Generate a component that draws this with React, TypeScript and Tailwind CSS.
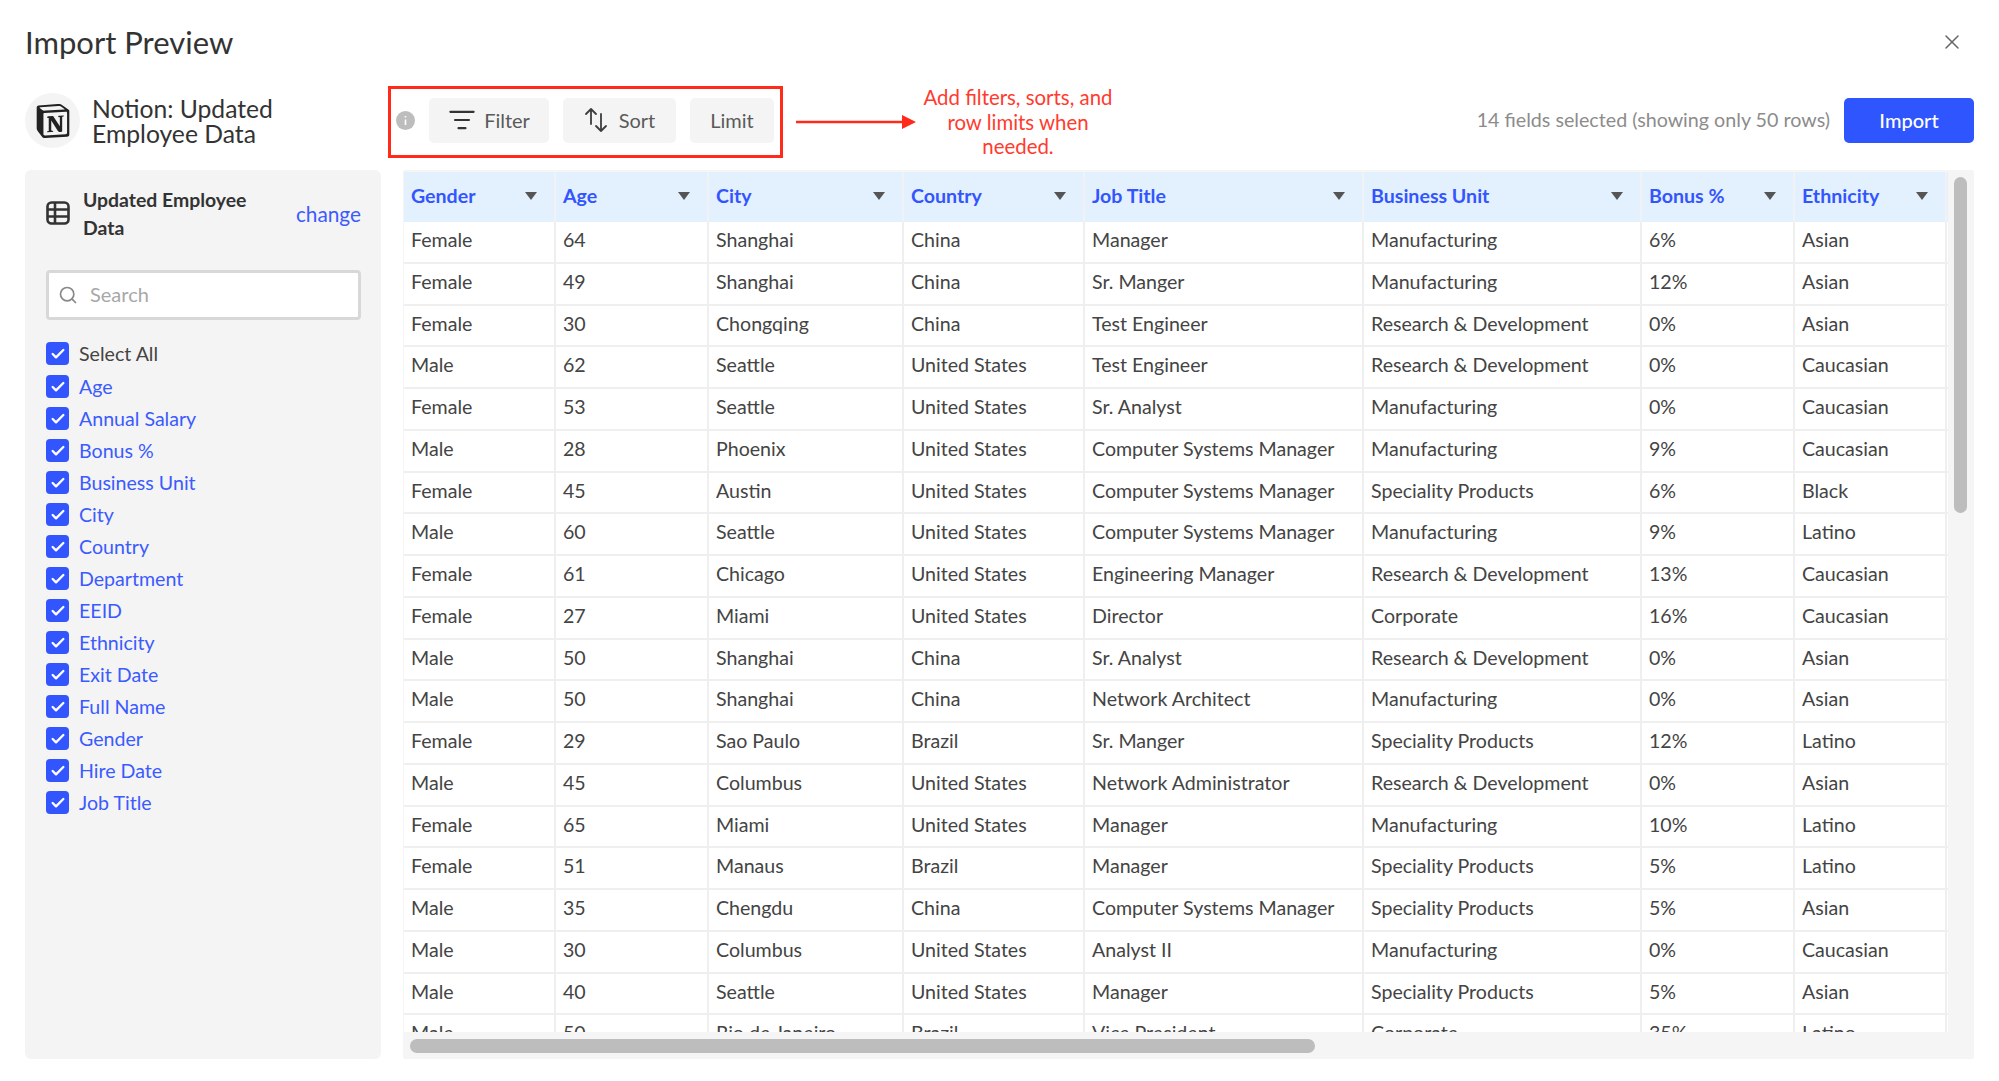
import React from "react";
import { SiNotion } from "react-icons/si";
import { Check, ListFilter, Search, X } from "lucide-react";

const columns = ["Gender", "Age", "City", "Country", "Job Title", "Business Unit", "Bonus %", "Ethnicity"];
const rows = [
  ["Female", "64", "Shanghai", "China", "Manager", "Manufacturing", "6%", "Asian"],
  ["Female", "49", "Shanghai", "China", "Sr. Manger", "Manufacturing", "12%", "Asian"],
  ["Female", "30", "Chongqing", "China", "Test Engineer", "Research & Development", "0%", "Asian"],
  ["Male", "62", "Seattle", "United States", "Test Engineer", "Research & Development", "0%", "Caucasian"],
  ["Female", "53", "Seattle", "United States", "Sr. Analyst", "Manufacturing", "0%", "Caucasian"],
  ["Male", "28", "Phoenix", "United States", "Computer Systems Manager", "Manufacturing", "9%", "Caucasian"],
  ["Female", "45", "Austin", "United States", "Computer Systems Manager", "Speciality Products", "6%", "Black"],
  ["Male", "60", "Seattle", "United States", "Computer Systems Manager", "Manufacturing", "9%", "Latino"],
  ["Female", "61", "Chicago", "United States", "Engineering Manager", "Research & Development", "13%", "Caucasian"],
  ["Female", "27", "Miami", "United States", "Director", "Corporate", "16%", "Caucasian"],
  ["Male", "50", "Shanghai", "China", "Sr. Analyst", "Research & Development", "0%", "Asian"],
  ["Male", "50", "Shanghai", "China", "Network Architect", "Manufacturing", "0%", "Asian"],
  ["Female", "29", "Sao Paulo", "Brazil", "Sr. Manger", "Speciality Products", "12%", "Latino"],
  ["Male", "45", "Columbus", "United States", "Network Administrator", "Research & Development", "0%", "Asian"],
  ["Female", "65", "Miami", "United States", "Manager", "Manufacturing", "10%", "Latino"],
  ["Female", "51", "Manaus", "Brazil", "Manager", "Speciality Products", "5%", "Latino"],
  ["Male", "35", "Chengdu", "China", "Computer Systems Manager", "Speciality Products", "5%", "Asian"],
  ["Male", "30", "Columbus", "United States", "Analyst II", "Manufacturing", "0%", "Caucasian"],
  ["Male", "40", "Seattle", "United States", "Manager", "Speciality Products", "5%", "Asian"],
  ["Male", "50", "Rio de Janeiro", "Brazil", "Vice President", "Corporate", "35%", "Latino"],
];
const fields = ["Age", "Annual Salary", "Bonus %", "Business Unit", "City", "Country", "Department", "EEID", "Ethnicity", "Exit Date", "Full Name", "Gender", "Hire Date", "Job Title"];

const gridCols = "grid grid-cols-[152px_153px_195px_181px_279px_278px_153px_152px]";

function Box() {
  return (
    <span className="flex h-[23px] w-[23px] shrink-0 items-center justify-center rounded-[4px] bg-[#3355ff]">
      <Check size={16} strokeWidth={3.5} className="text-white" />
    </span>
  );
}

function SortIcon() {
  return (
    <svg width="24" height="26" viewBox="0 0 24 26" fill="none" stroke="#3d3d3d" strokeWidth="1.8" strokeLinecap="round" strokeLinejoin="round">
      <path d="M7 17V2M2 7l5-5 5 5" />
      <path d="M17 7v17M12 19l5 5 5-5" />
    </svg>
  );
}

function TableIcon() {
  return (
    <svg className="mb-[2px] shrink-0" width="24" height="24" viewBox="0 0 24 24" fill="none" stroke="#333333" strokeWidth="2.6" strokeLinejoin="round">
      <rect x="1.5" y="1.5" width="21" height="21" rx="4" />
      <path d="M1.5 8.5h21M1.5 15.5h21M9 1.5v21" />
    </svg>
  );
}

function InfoDot() {
  return (
    <svg className="shrink-0" width="19" height="19" viewBox="0 0 19 19">
      <circle cx="9.5" cy="9.5" r="9.5" fill="#bdbdbd" />
      <path d="M9.5 8.5v5.5M9.5 5v1.6" stroke="#ffffff" strokeWidth="1.6" />
    </svg>
  );
}

export default function App() {
  return (
    <div className="flex h-[1081px] w-[1999px] flex-col overflow-hidden bg-white pl-[25px] pr-[25px] font-['Lato',sans-serif] text-[#444444]">
      <div className="flex h-[86px] shrink-0 items-center justify-between pb-[2px]">
        <h1 className="text-[31px] font-normal leading-none text-[#333333]">Import Preview</h1>
        <X size={24} strokeWidth={1.5} className="mr-[10px] text-[#666666]" />
      </div>

      <div className="flex h-[72px] shrink-0 items-center">
        <div className="flex w-[363px] shrink-0 items-center gap-[12px] pb-[3px]">
          <div className="flex h-[55px] w-[55px] items-center justify-center rounded-full bg-[#f4f4f4]">
            <SiNotion size={34} className="text-[#222222]" />
          </div>
          <div className="text-[24.7px] leading-[25px] text-[#333333]">Notion: Updated<br />Employee Data</div>
        </div>

        <div className="flex h-[72px] w-[395px] shrink-0 items-center border-[3px] border-[#ff2a1a] pb-[4px] pl-[5px]">
          <InfoDot />
          <button className="ml-[14px] flex h-[45px] w-[120px] items-center justify-center gap-[8px] rounded-[5px] bg-[#f4f4f4] text-[20px] text-[#5a5a5a]">
            <ListFilter size={28} strokeWidth={1.8} className="text-[#333333]" />
            Filter
          </button>
          <button className="ml-[14px] flex h-[45px] w-[113px] items-center justify-center gap-[11px] rounded-[5px] bg-[#f4f4f4] text-[20px] text-[#5a5a5a]">
            <SortIcon />
            Sort
          </button>
          <button className="ml-[14px] flex h-[45px] w-[84px] items-center justify-center rounded-[5px] bg-[#f4f4f4] text-[20px] text-[#5a5a5a]">
            Limit
          </button>
        </div>

        <svg className="ml-[13px] shrink-0" width="120" height="14" viewBox="0 0 120 14">
          <path d="M0 7h108" stroke="#ff2a1a" strokeWidth="2.5" />
          <path d="M106 0l14 7-14 7z" fill="#ff2a1a" />
        </svg>

        <div className="w-[204px] shrink-0 text-center text-[20.4px] leading-[24.5px] text-[#ff3b2e]">
          Add filters, sorts, and<br />row limits when<br />needed.
        </div>

        <div className="mb-[4px] ml-auto text-[19.7px] text-[#8c8c8c]">14 fields selected (showing only 50 rows)</div>
        <button className="mb-[3px] ml-[14px] h-[45px] w-[130px] rounded-[5px] bg-[#2f55ff] pb-[1px] text-[20px] font-medium text-white">Import</button>
      </div>

      <div className="mt-[12px] flex h-[889px] gap-[22px]">
        <aside className="w-[356px] shrink-0 rounded-[6px] bg-[#f4f4f4] pl-[21px] pr-[20px]">
          <div className="flex h-[100px] items-center pb-[12px]">
            <TableIcon />
            <div className="ml-[13px] w-[190px] text-[19.4px] font-bold leading-[28px] text-[#333333]">Updated Employee Data</div>
            <div className="ml-auto text-[20.8px] text-[#3b5bff]">change</div>
          </div>
          <div className="flex h-[50px] items-center rounded-[4px] border-[3px] border-[#d8d8d8] bg-white pl-[9px] text-[20px] text-[#a8a8a8]">
            <Search size={20} strokeWidth={2} className="text-[#888888]" />
            <span className="ml-[12px] pb-[2px]">Search</span>
          </div>
          <div className="mt-[22px] flex h-[23px] items-center gap-[10px] text-[19.6px] text-[#444444]">
            <Box />Select All
          </div>
          <ul className="mt-[10px] flex flex-col gap-[9px]">
            {fields.map((f) => (
              <li key={f} className="flex h-[23px] items-center gap-[10px] text-[19.6px] text-[#3b5bff]">
                <Box />{f}
              </li>
            ))}
          </ul>
        </aside>

        <div className="flex min-w-0 flex-1 flex-col rounded-[2px] bg-[#f5f5f5] pl-[1px] pt-[2px]">
          <div className="flex min-h-0 flex-1">
            <div className="h-[860px] w-[1544px] shrink-0 overflow-hidden bg-white">
              <div className={`${gridCols} h-[50px] bg-[#e3f0fd]`}>
                {columns.map((c) => (
                  <div key={c} className="flex items-center justify-between border-r-2 border-[#f0f2f5] pb-[3px] pl-[7px] pr-[17px] text-[19.6px] font-bold text-[#3355ff]">
                    {c}
                    <span className="h-0 w-0 border-x-[6px] border-t-[8px] border-x-transparent border-t-[#555555]" />
                  </div>
                ))}
              </div>
              {rows.map((r, i) => (
                <div key={i} className={`${gridCols} h-[41.75px] border-b-2 border-[#efefef]`}>
                  {r.map((v, j) => (
                    <div key={j} className="flex items-center whitespace-nowrap border-r-2 border-[#efefef] pb-[4px] pl-[7px] text-[19.6px] text-[#444444]">
                      {v}
                    </div>
                  ))}
                </div>
              ))}
            </div>
            <div className="ml-[6px] mt-[5px] h-[336px] w-[13px] rounded-full bg-[#bdbdbd]" />
          </div>
          <div className="h-[26px] shrink-0 pl-[6px] pt-[6px]">
            <div className="h-[14px] w-[905px] rounded-full bg-[#bdbdbd]" />
          </div>
        </div>
      </div>
    </div>
  );
}
